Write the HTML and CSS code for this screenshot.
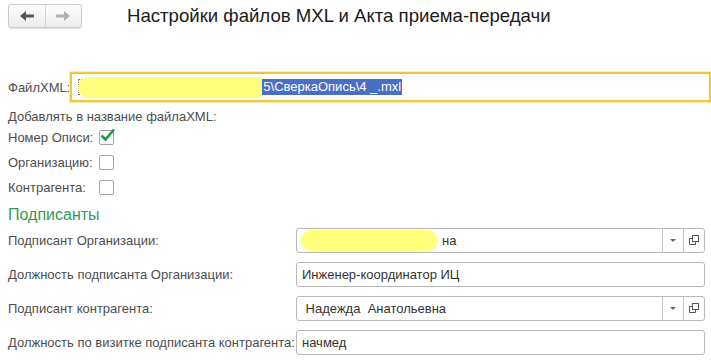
FILE: index.html
```html
<!DOCTYPE html>
<html lang="ru">
<head>
    <meta charset="UTF-8">
    <title>Настройки файлов MXL и Акта приема-передачи</title>
    <link rel="stylesheet" href="styles.css">
</head>
<body>
    <div class="toolbar">
        <div class="nav">
            <button class="nav-btn">
                <svg width="14" height="10" viewBox="0 0 14 10"><path d="M0 5 L6 0 V3.5 H14 V6.5 H6 V10 Z" fill="#555"/></svg>
            </button>
            <button class="nav-btn">
                <svg width="14" height="10" viewBox="0 0 14 10"><path d="M14 5 L8 0 V3.5 H0 V6.5 H8 V10 Z" fill="#b0b0b0"/></svg>
            </button>
        </div>
        <h1 class="title">Настройки файлов MXL и Акта приема-передачи</h1>
    </div>

    <div class="file-row">
        <span class="label">ФайлXML:</span>
        <div class="file-input">
            <span class="caret"></span>
            <span class="blob file-blob"></span>
            <span class="selected">5\СверкаОпись\4 _.mxl</span>
        </div>
    </div>

    <div class="hint">Добавлять в название файлаXML:</div>
    <div class="check-row">
        <span class="check-label">Номер Описи:</span>
        <span class="checkbox">
            <svg width="17" height="15" viewBox="0 0 17 15"><path d="M2.5 7.5 L6.5 11.5 L15 1.5" fill="none" stroke="#1e9b4b" stroke-width="2.6"/></svg>
        </span>
    </div>
    <div class="check-row">
        <span class="check-label">Организацию:</span>
        <span class="checkbox"></span>
    </div>
    <div class="check-row">
        <span class="check-label">Контрагента:</span>
        <span class="checkbox"></span>
    </div>

    <h2 class="group-title">Подписанты</h2>
    <div class="signers">
        <span class="label">Подписант Организации:</span>
        <div class="field combo">
            <span class="field-text"><span class="blob org-blob"></span>на</span>
            <span class="field-btn"><span class="arrow"></span></span>
            <span class="field-btn">
                <svg width="11" height="11" viewBox="0 0 11 11"><rect x="3.5" y="0.5" width="6" height="6" fill="none" stroke="#555"/><path d="M3.5 3.5 H0.5 V9.5 H6.5 V6.5" fill="none" stroke="#555"/></svg>
            </span>
        </div>

        <span class="label">Должность подписанта Организации:</span>
        <div class="field">
            <span class="field-text">Инженер-координатор ИЦ</span>
        </div>

        <span class="label">Подписант контрагента:</span>
        <div class="field combo">
            <span class="field-text">&nbsp;Надежда&nbsp; Анатольевна</span>
            <span class="field-btn"><span class="arrow"></span></span>
            <span class="field-btn">
                <svg width="11" height="11" viewBox="0 0 11 11"><rect x="3.5" y="0.5" width="6" height="6" fill="none" stroke="#555"/><path d="M3.5 3.5 H0.5 V9.5 H6.5 V6.5" fill="none" stroke="#555"/></svg>
            </span>
        </div>

        <span class="label">Должность по визитке подписанта контрагента:</span>
        <div class="field">
            <span class="field-text">начмед</span>
        </div>
    </div>
</body>
</html>
```

FILE: styles.css
```css
body {
    margin: 0;
    padding: 4px 0 0 8px;
    font-family: "Liberation Sans", Arial, sans-serif;
    font-size: 13px;
    color: #4d4d4d;
    background: #fff;
    overflow: hidden;
}

.toolbar {
    display: flex;
    align-items: center;
    height: 24px;
}

.nav {
    display: flex;
    width: 74px;
    height: 24px;
    box-sizing: border-box;
    border: 1px solid #c9c9c9;
    border-radius: 3px;
    background: linear-gradient(#fdfdfd, #ececec);
    box-shadow: 0 1px 1px rgba(0, 0, 0, 0.12);
}

.nav-btn {
    flex: 1;
    display: flex;
    align-items: center;
    justify-content: center;
    padding: 0;
    border: none;
    background: none;
}

.nav-btn + .nav-btn {
    border-left: 1px solid #d4d4d4;
}

.title {
    margin: 0 0 0 45px;
    font-size: 18.6px;
    font-weight: normal;
    color: #1a1a1a;
}

.file-row {
    display: flex;
    align-items: center;
    margin-top: 44px;
    height: 30px;
}

.file-row .label {
    width: 63px;
}

.file-input {
    display: flex;
    align-items: center;
    width: 680px;
    height: 30px;
    box-sizing: border-box;
    border: 2px solid #efc63c;
    box-shadow: 0 0 0 1px #fbecae;
    padding-left: 6px;
    overflow: hidden;
}

.caret {
    width: 3px;
    height: 14px;
    border: 1px dotted #777;
    border-right: none;
}

.blob {
    display: inline-block;
    background: #ffff7c;
    border-radius: 11px;
}

.file-blob {
    width: 190px;
    height: 21px;
    margin-left: -4px;
}

.selected {
    margin-left: -6px;
    padding: 0 1px;
    line-height: 16px;
    background: #4a6dc7;
    color: #fff;
}

.hint {
    margin-top: 7px;
    line-height: 16px;
}

.check-row {
    display: flex;
    align-items: center;
    height: 25px;
}

.check-label {
    width: 91px;
}

.checkbox {
    position: relative;
    width: 15px;
    height: 15px;
    box-sizing: border-box;
    border: 1px solid #a3a3a3;
    border-radius: 2px;
    background: #fff;
}

.checkbox svg {
    position: absolute;
    left: -1px;
    top: -3px;
}

.group-title {
    margin: 0;
    font-size: 16px;
    font-weight: normal;
    line-height: 20px;
    margin-top: 5px;
    color: #2f9a55;
}

.signers {
    display: grid;
    grid-template-columns: 288px 409px;
    grid-auto-rows: 25px;
    row-gap: 9px;
    align-items: center;
    margin-top: 3px;
}

.field {
    display: flex;
    height: 25px;
    box-sizing: border-box;
    border: 1px solid #b9b9b9;
    border-radius: 3px;
    background: #fff;
    color: #333;
}

.field-text {
    flex: 1;
    display: flex;
    align-items: center;
    padding-left: 5px;
    white-space: pre;
}

.org-blob {
    width: 137px;
    height: 21px;
    margin-left: -1px;
    margin-right: 4px;
}

.field-btn {
    width: 20px;
    display: flex;
    align-items: center;
    justify-content: center;
    border-left: 1px solid #c6c6c6;
}

.arrow {
    width: 0;
    height: 0;
    border-left: 3px solid transparent;
    border-right: 3px solid transparent;
    border-top: 3px solid #666;
}
```
